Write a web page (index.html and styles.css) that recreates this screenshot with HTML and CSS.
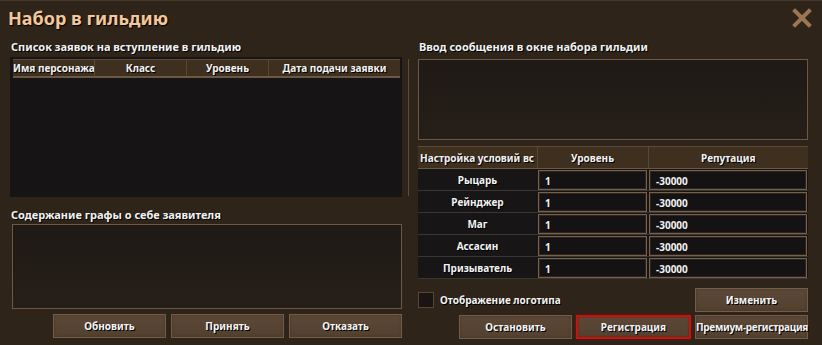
FILE: index.html
```html
<!DOCTYPE html>
<html lang="ru">
  <head>
    <meta charset="UTF-8" />
    <meta name="viewport" content="width=device-width, initial-scale=1.0" />
    <title>Набор в гильдию</title>
    <link rel="stylesheet" href="styles.css">
  </head>
  <body>
    <div class="window">
      <div class="header">
        <h1 class="title">Набор в гильдию</h1>
        <svg class="close" width="20" height="20" viewBox="0 0 20 20">
          <path d="M3 3 L17 17 M17 3 L3 17" stroke="#9c7652" stroke-width="4" stroke-linecap="square" />
        </svg>
      </div>

      <div class="content">
        <div class="left">
          <p class="label">Список заявок на вступление в гильдию</p>
          <div class="list">
            <div class="list-head">
              <div class="col col-name">Имя персонажа</div>
              <div class="col col-class">Класс</div>
              <div class="col col-level">Уровень</div>
              <div class="col col-date">Дата подачи заявки</div>
            </div>
          </div>

          <p class="label label-about">Содержание графы о себе заявителя</p>
          <div class="textbox textbox-about"></div>

          <div class="buttons">
            <button class="btn">Обновить</button>
            <button class="btn">Принять</button>
            <button class="btn">Отказать</button>
          </div>
        </div>

        <div class="divider"></div>

        <div class="right">
          <p class="label">Ввод сообщения в окне набора гильдии</p>
          <div class="textbox textbox-msg"></div>

          <table class="conditions">
            <tr class="cond-head">
              <th class="th-first">Настройка условий вс</th>
              <th>Уровень</th>
              <th>Репутация</th>
            </tr>
            <tr>
              <td class="cls">Рыцарь</td>
              <td><div class="cell">1</div></td>
              <td><div class="cell">-30000</div></td>
            </tr>
            <tr>
              <td class="cls">Рейнджер</td>
              <td><div class="cell">1</div></td>
              <td><div class="cell">-30000</div></td>
            </tr>
            <tr>
              <td class="cls">Маг</td>
              <td><div class="cell">1</div></td>
              <td><div class="cell">-30000</div></td>
            </tr>
            <tr>
              <td class="cls">Ассасин</td>
              <td><div class="cell">1</div></td>
              <td><div class="cell">-30000</div></td>
            </tr>
            <tr>
              <td class="cls">Призыватель</td>
              <td><div class="cell">1</div></td>
              <td><div class="cell">-30000</div></td>
            </tr>
          </table>

          <div class="options">
            <label class="check">
              <span class="box"></span>
              Отображение логотипа
            </label>
            <button class="btn">Изменить</button>
          </div>

          <div class="buttons">
            <button class="btn">Остановить</button>
            <button class="btn btn-active">Регистрация</button>
            <button class="btn btn-long">Премиум-регистрация</button>
          </div>
        </div>
      </div>
    </div>
  </body>
</html>
```

FILE: styles.css
```css
* {
  box-sizing: border-box;
  font-family: "Noto Sans", "DejaVu Sans", sans-serif;
}
body {
  margin: 0;
  background-color: #2e2419;
}
.window {
  width: 822px;
  height: 345px;
  background-color: #2e2419;
  border-top: 1px solid #45372a;
  overflow: hidden;
}
.header {
  display: flex;
  justify-content: space-between;
  align-items: center;
  height: 33px;
  padding: 0 10px 0 8px;
}
.title {
  margin: 0;
  font-size: 18px;
  font-weight: bold;
  color: #f3c89c;
  text-shadow: 1px 1px 1px #000;
}
.close {
  display: block;
}
.content {
  display: flex;
  padding-left: 10px;
}
.left {
  width: 392px;
  display: flex;
  flex-direction: column;
}
.right {
  width: 390px;
  display: flex;
  flex-direction: column;
}
.divider {
  width: 1px;
  height: 137px;
  margin: 25px 9px 0 6px;
  background-color: #5e4b38;
}
.label {
  margin: 5px 0 0 1px;
  height: 16px;
  font-size: 11px;
  font-weight: bold;
  color: #f2f2f2;
  text-shadow: 1px 1px 0 #000;
}
.list {
  margin-top: 2px;
  height: 140px;
  background-color: #161414;
  padding: 2px 2px 0 3px;
}
.list-head {
  display: flex;
  height: 19px;
  background-color: #3f2f1f;
  border-top: 1px solid #5c4a36;
  border-bottom: 2px solid #6b5842;
}
.col {
  font-size: 10px;
  font-weight: bold;
  color: #f2f2f2;
  text-shadow: 1px 1px 0 #000;
  line-height: 16px;
  text-align: center;
  white-space: nowrap;
  overflow: hidden;
  border-right: 1px solid #5a4834;
}
.col-name {
  width: 82px;
  text-align: left;
}
.col-class {
  width: 92px;
}
.col-level {
  width: 82px;
}
.col-date {
  flex: 1;
  border-right: none;
}
.label-about {
  margin-top: 10px;
}
.textbox {
  border: 1px solid #6e5843;
  background: linear-gradient(#1f1a16, #261f19);
}
.textbox-about {
  margin: 1px 0 0 2px;
  height: 85px;
}
.textbox-msg {
  margin-top: 4px;
  height: 81px;
}
.buttons {
  display: flex;
  justify-content: flex-end;
  gap: 5px;
  margin-top: 5px;
}
.btn {
  width: 113px;
  height: 24px;
  padding: 0;
  font-size: 10px;
  font-weight: bold;
  white-space: nowrap;
  color: #f4f4f4;
  text-shadow: 1px 1px 0 #000;
  background: linear-gradient(#5d4838, #53402f);
  border: 1px solid #735d48;
  box-shadow: inset 0 0 3px #45362a;
}
.btn-long {
  letter-spacing: -0.3px;
}
.btn-active {
  width: 115px;
  border: 2px solid #c4140f;
  box-shadow: 0 0 3px #8a0c08, inset 0 0 2px #7a0c08;
}
.conditions {
  margin-top: 6px;
  width: 390px;
  border-collapse: collapse;
  background-color: #171515;
}
.cond-head th {
  height: 22px;
  padding: 0;
  background-color: #3f2f1f;
  border-top: 1px solid #5c4a36;
  border-bottom: 1px solid #6b5842;
  font-size: 10px;
  font-weight: bold;
  color: #f2f2f2;
  text-shadow: 1px 1px 0 #000;
}
.cond-head th + th {
  border-left: 1px solid #5a4834;
}
.th-first {
  width: 119px;
  text-align: left;
  white-space: nowrap;
  padding-left: 2px !important;
}
.conditions th:nth-child(2) {
  width: 111px;
}
.conditions td {
  height: 22px;
  padding: 0 1px;
  border-bottom: 1px solid #3a3634;
}
.cls {
  text-align: center;
  font-size: 10px;
  font-weight: bold;
  color: #f2f2f2;
  text-shadow: 1px 1px 0 #000;
}
.cell {
  height: 20px;
  border: 1px solid #7a6048;
  box-shadow: inset 0 0 0 1px #2c2420;
  background-color: #141212;
  padding: 4px 0 0 6px;
  font-size: 10px;
  font-weight: bold;
  color: #f2f2f2;
  line-height: 13px;
}
.options {
  display: flex;
  justify-content: space-between;
  align-items: center;
  margin-top: 9px;
}
.check {
  display: flex;
  align-items: center;
  gap: 6px;
  font-size: 10px;
  font-weight: bold;
  color: #f2f2f2;
  text-shadow: 1px 1px 0 #000;
}
.box {
  width: 16px;
  height: 16px;
  background-color: #1a1512;
  border: 1px solid #5a4633;
}
.right .buttons {
  gap: 4px;
  margin-top: 3px;
}
```
